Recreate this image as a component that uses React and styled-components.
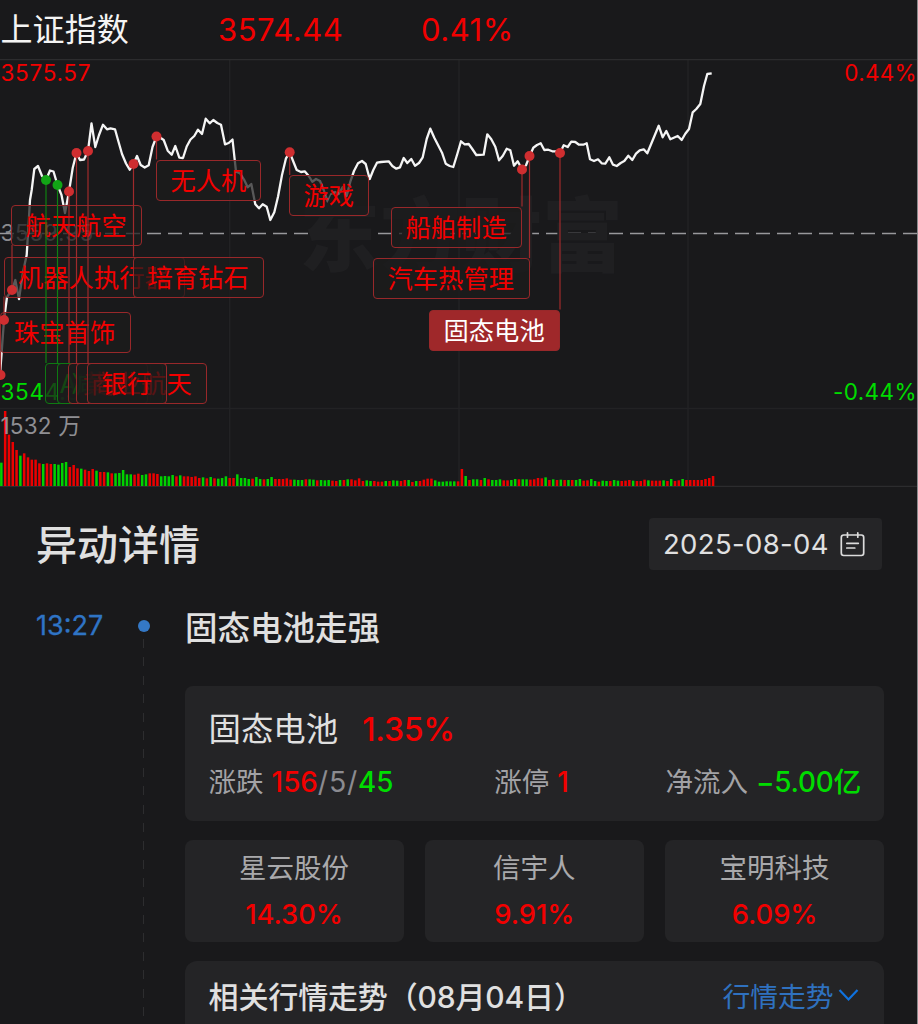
import React from 'react';
import styled, { createGlobalStyle } from 'styled-components';

const RED = '#f20000';
const GREEN = '#00dc00';

const Global = createGlobalStyle`
  * { box-sizing: border-box; }
  body { margin: 0; background: #19191b; }
`;

const Page = styled.main`
  width: 918px;
  height: 1024px;
  overflow: hidden;
  background: #19191b;
  border-right: 1px solid #8b8b8e;
  color: #e0e0e0;
  font-family: Inter, "Noto Sans CJK SC", sans-serif;
  white-space: nowrap;
`;

const Quote = styled.header`
  display: flex;
  align-items: center;
  height: 59px;
  font-size: 31px;
  line-height: 59px;
  letter-spacing: 0.5px;
  color: ${RED};
`;
const IndexName = styled.span`
  width: 218px;
  padding-left: 0.5px;
  font-size: 32px;
  letter-spacing: 0.1px;
  color: #f4f4f4;
`;
const IndexPrice = styled.span`
  width: 203px;
`;

const Chart = styled.section`
  position: relative;
  height: 428px;
  overflow: hidden;
`;
const Plot = styled.svg`
  display: block;
  width: 918px;
  height: 428px;
`;
const Layer = styled.svg`
  position: absolute;
  inset: 0;
  width: 918px;
  height: 428px;
`;
const Watermark = styled.div`
  position: absolute;
  left: 299px;
  top: 113px;
  font: 900 81px/116px "Noto Sans CJK SC", sans-serif;
  color: #1f1f21;
`;
const AxisLabel = styled.span`
  position: absolute;
  ${(p) => (p.$right ? 'right: 0' : 'left: 0.5px')};
  top: ${(p) => p.$top}px;
  font-size: 22.5px;
  line-height: 28px;
  letter-spacing: ${(p) => p.$track ?? 0.7}px;
  color: ${(p) => p.$color};
`;
const Tag = styled.span`
  position: absolute;
  left: ${(p) => p.$x}px;
  top: ${(p) => p.$y}px;
  width: ${(p) => p.$w}px;
  height: 41px;
  border: 1px solid ${(p) => (p.$green ? '#0e7a12' : '#98282a')};
  border-radius: 4px;
  padding-left: 13.5px;
  overflow: hidden;
  background: ${(p) => (p.$active ? '#9f282a' : 'rgba(28, 28, 28, 0.72)')};
  color: ${(p) => (p.$active ? '#fff' : p.$green ? '#00b400' : RED)};
  font-size: 25.3px;
  line-height: 39px;
`;

const Details = styled.section`
  padding: 31px 33px 0 36px;
`;
const DetailsHead = styled.div`
  display: flex;
  justify-content: space-between;
  align-items: center;
  height: 52px;
  padding-right: 2px;
`;
const Heading = styled.h1`
  margin: 0;
  padding-top: 1px;
  font-size: 41px;
  font-weight: 500;
  line-height: 52px;
`;
const DateButton = styled.button`
  display: flex;
  align-items: center;
  justify-content: space-between;
  width: 233px;
  height: 52px;
  padding: 0 17px 0 14px;
  border: 0;
  border-radius: 4px;
  background: #252527;
  color: #e0e0e0;
  font: 400 27.5px/52px Inter, sans-serif;
  letter-spacing: 0.35px;
`;
const Event = styled.article`
  display: grid;
  grid-template-columns: 67px 81px 1fr;
  margin-top: 36px;
`;
const Time = styled.time`
  font-size: 27px;
  line-height: 40px;
  -webkit-text-stroke: 0.3px #2f74c5;
  color: #2f74c5;
`;
const Track = styled.div`
  display: flex;
  flex-direction: column;
  align-items: center;
  padding-top: 14px;
`;
const TrackDot = styled.i`
  width: 12px;
  height: 12px;
  border-radius: 50%;
  background: #3478c6;
`;
const TrackLine = styled.i`
  width: 1px;
  height: 390px;
  margin-top: 7px;
  background: repeating-linear-gradient(#2d2d2f 0 9px, transparent 9px 18.4px);
`;
const Body = styled.div`
  display: flex;
  flex-direction: column;
  padding-left: 0.6px;
`;
const EventTitle = styled.h2`
  margin: 2px 0 36px 0.5px;
  font-size: 32.5px;
  font-weight: 500;
  line-height: 42px;
`;
const Card = styled.section`
  width: 699.5px;
  height: ${(p) => p.$h}px;
  border-radius: ${(p) => p.$radius || 8}px;
  background: #242426;
  padding: 0 23px 0 24px;
`;
const Sector = styled.div`
  display: flex;
  align-items: center;
  gap: 24px;
  padding-top: 21px;
  font-size: 32.4px;
  line-height: 46px;
`;
const SectorChange = styled.strong`
  margin-top: -1px;
  font-size: 32px;
  font-weight: 500;
  letter-spacing: -0.2px;
  color: ${RED};
`;
const Stats = styled.div`
  display: flex;
  justify-content: space-between;
  margin-top: 9px;
  font-size: 27.5px;
  line-height: 40px;
  color: #a2a2a5;
`;
const Stat = styled.span`
  display: flex;
  gap: 8px;
  padding-left: ${(p) => p.$inset || 0}px;
`;
const Figure = styled.span`
  font-size: ${(p) => (p.$color ? 27.8 : 28.5)}px;
  font-weight: ${(p) => (p.$color ? 500 : 400)};
  letter-spacing: ${(p) => p.$track || 0}px;
  color: ${(p) => p.$color || '#8b8b90'};
`;
const Stocks = styled.div`
  display: grid;
  grid-template-columns: repeat(3, 219px);
  justify-content: space-between;
  width: 699.5px;
  margin: 19px 0;
`;
const Stock = styled.div`
  height: 102px;
  padding-top: 5px;
  border-radius: 8px;
  background: #242426;
  text-align: center;
  font-size: 27.5px;
  line-height: 46px;
  color: #a9a9ab;
`;
const StockChange = styled.div`
  margin-top: 1px;
  font-size: 27.3px;
  font-weight: 500;
  color: ${RED};
`;
const TrendHead = styled.div`
  display: flex;
  justify-content: space-between;
  align-items: center;
  height: 67px;
  font-size: 30px;
  font-weight: 500;
`;
const TrendTitle = styled.span`
  letter-spacing: -0.15px;
`;
const TrendLink = styled.span`
  display: flex;
  align-items: center;
  gap: 4px;
  padding-right: 2.5px;
  font-size: 27.8px;
  font-weight: 400;
  color: #2f71bf;
`;

const PRICE =
  '0,375 4,320 7,297 12,290 15.3,280 19,299 23,272 26.7,255 30,200 31.7,190 34.3,169 38,166 42,176 46,180 50,170.5 53.5,171.5 57.5,185 61.5,195 65,213 69,191.5 72.7,168 76.5,153 80,160 84,159.5 88,151 91.5,123.5 95.3,147 99,135 103,124.7 107,129.3 110.5,128.3 115,129.3 118,140 122,154 126,163.5 129.7,169.7 133.5,164 137,156 140.7,165 144.7,167.5 148.7,165.3 152.5,147 156.5,136.5 160,137.5 163.7,140 167.7,150.7 171.7,154.7 175.3,146 179.3,157.7 183,158 186.7,146.5 190.5,139.5 194.3,136 198,129.7 202,134 205.7,118.7 209.7,123.3 213.3,120 217.3,123 221,124.7 225,144.3 228.7,143 232.5,139.5 236,171.7 240,173.3 244,179.5 247.7,187.3 251.3,184 255.3,204.3 259,208.3 262.7,204.3 266.7,206.7 270.3,220 274.3,212.3 278,196.7 282,175 286,158.3 289.7,152.3 293.3,161.5 296.7,170 301,172 304.7,171.3 308.7,176 312.3,181.7 316,179 320,181 323.7,190 327.7,201.7 331.3,194 335,192 338.7,194 342.7,187 346.7,196 350.3,181.7 354,171 358,163.3 362,161 365.7,164 369.7,179 373.3,170 377,162.7 381,162 388.7,161.3 392.3,166 396.3,168.7 400,167.3 403.7,158 407.3,163 411.3,159 415,165.7 419,163 422.7,157.3 426.7,139 430.3,128.7 434.3,137.7 442,152.7 445.7,163.7 449.7,166 453.3,167 457.3,154 461,141.3 464.7,144.3 468.7,144 472.3,149 476.3,155 483.7,154.7 487.3,134.3 491.3,139.3 495.3,146.7 499,160.3 502.7,156 506.7,148.7 510.3,150.3 514,165.7 517.7,161.3 522,169.3 526,165.3 529.7,156 533.3,147.7 537,145 540.7,143.3 544.3,150 548.3,149.7 552.3,151.3 556.3,151.3 560,153 563.7,145.3 567.7,147 571.3,141.7 575.3,142 579,144.7 583.3,144.7 586.7,143.3 590,159.3 594,161 598,159.3 601.7,163.3 605.3,163.7 609.3,157.3 613,164.7 616.7,166 620.7,163 624.3,161 628.3,155.7 632.3,160 636,153.7 639.7,150.3 643.7,149.3 647.3,153.3 658.7,125.7 662.7,137.3 666.3,131 670.3,139.3 677.7,136 681.7,140 685.3,133.7 689,129 692.7,112.3 696.3,109 700.3,104 704,86 707.3,74 711.7,73.3';

const VOLUME = (
  'g70 r225 r154 r132 r108 g91 r98 r86 r79 r79 r68 g66 r68 r66 g66 g64 g69 g72 r57 r63 r53 g52 r49 r45 r51 g46 r42 r42 g41 r38 ' +
  'g38 g39 g48 g35 g35 r34 r37 g33 g35 r38 r38 r36 g29 g30 g29 g33 r29 g32 r29 r29 r27 r29 r24 g26 r23 g27 r23 g22 g24 g29 ' +
  'r24 r24 g35 g24 g24 g21 r22 g27 g21 r20 g21 g27 r21 r21 r21 r23 r19 g19 g18 g18 r20 g20 g19 r17 g18 g17 g18 r16 r15 g18 ' +
  'r18 g20 r20 r17 r23 r15 g17 g15 r15 r13 r13 g15 r15 g17 g16 r15 r18 g18 r12 g15 r15 r19 r22 r22 g17 g13 g13 g14 g14 g14 ' +
  'r14 r51 g30 r18 g20 g20 r18 g24 r20 g18 g18 g20 r17 r17 g18 g21 r20 g20 g20 r19 r20 r24 r23 g26 r18 g20 r18 g19 r18 g18 ' +
  'r18 g18 g21 r16 r17 g21 g15 r13 g16 g15 r15 g18 g16 r15 r16 r18 g16 r15 r15 r19 g17 r16 r16 r16 g17 r15 g21 r15 r17 g21 ' +
  'r18 r18 r18 r18 r18 r21 r24 r30'
).split(' ');

// Coordinates are in page space; the chart itself starts at TOP.
const TOP = 59;
const MARKS = [
  { name: '珠宝首饰', dot: [0.5, 375], x: -0.5, y: 311.5, w: 131 },
  { name: '机器人执行器', dot: [4, 320], x: 3.5, y: 256.5, w: 181.5 },
  { name: '航天航空', dot: [12, 290], x: 11, y: 205, w: 131 },
  { name: 'AI应用', dot: [46, 180], x: 45, y: 363, w: 106, green: true },
  { name: '减肥药', dot: [57.5, 185], x: 57, y: 363, w: 106, green: true },
  { name: '黄金', dot: [69, 191.5], x: 68, y: 363, w: 80 },
  { name: '商业航天', dot: [76.5, 153], x: 76, y: 363, w: 131 },
  { name: '银行', dot: [88, 151], x: 87, y: 363, w: 80 },
  { name: '培育钻石', dot: [133.5, 164], x: 133, y: 256.5, w: 131 },
  { name: '无人机', dot: [156.5, 136.5], x: 156, y: 159.5, w: 105 },
  { name: '游戏', dot: [289.7, 152.3], x: 289, y: 175, w: 80 },
  { name: '船舶制造', dot: [522, 169.5], x: 391, y: 206.5, w: 131 },
  { name: '汽车热管理', dot: [529.5, 156], x: 373, y: 258, w: 156.5 },
  { name: '固态电池', dot: [560, 153], x: 429, y: 309.5, w: 131, active: true },
];

const STOCKS = [
  ['星云股份', '14.30%'],
  ['信宇人', '9.91%'],
  ['宝明科技', '6.09%'],
];

function CalendarIcon() {
  return (
    <svg width="25" height="26" viewBox="0 0 25 26" fill="none" stroke="#dcdcdc" strokeWidth="1.7" strokeLinecap="round">
      <rect x="1.300" y="4" width="22.400" height="20.500" rx="2.400" />
      <path d="M7.500 1.800v4.400M17.800 1.800v4.400M6.800 12.300h11.500M6.800 17h8" />
    </svg>
  );
}

function Stem({ mark }) {
  const [x, y] = mark.dot;
  return (
    <Layer viewBox="0 59 918 428">
      <path
        d={`M${x} ${y}V${y < mark.y ? mark.y : mark.y + 40}`}
        stroke={mark.green ? '#0e8012' : '#a02a2c'}
        strokeWidth="1.200"
      />
    </Layer>
  );
}

function IndexChart() {
  return (
    <Chart>
      <Watermark>东方财富</Watermark>
      <AxisLabel $top={0} $color={RED}>3575.57</AxisLabel>
      <AxisLabel $top={0} $color={RED} $right $track={0.3}>0.44%</AxisLabel>
      <AxisLabel $top={160} $color="#8a8a8d">3559.95</AxisLabel>
      <AxisLabel $top={319} $color={GREEN}>3544.33</AxisLabel>
      <AxisLabel $top={319} $color={GREEN} $right $track={0.4}>-0.44%</AxisLabel>
      <AxisLabel $top={353} $color="#8f8f93" $track={0.2}>1532 万</AxisLabel>
      <Plot viewBox="0 59 918 428">
        <g stroke="#222224" strokeWidth="1.500">
          <path d="M0 408.500H918M229.700 60V486M459 60V486M688 60V486" />
          <path d="M0 59.500H918M0 486.500H918" stroke="#2c2c2e" />
        </g>
        {VOLUME.map((bar, i) => {
          const h = Number(bar.slice(1)) / 3;
          return <rect key={i} x={0.1 + 3.806 * i} y={486 - h} width="2.500" height={h} fill={bar[0] === 'r' ? '#ec0000' : '#00d200'} />;
        })}
        <path d="M0 233.500H918" stroke="#98989b" strokeWidth="1.300" strokeDasharray="14 7" />
        <polyline points={PRICE} fill="none" stroke="#f5f5f5" strokeWidth="2.300" strokeLinejoin="round" />
      </Plot>
      {MARKS.map((m) => (
        <React.Fragment key={m.name}>
          <Stem mark={m} />
          <Tag $x={m.x} $y={m.y - TOP} $w={m.w} $green={m.green} $active={m.active}>{m.name}</Tag>
        </React.Fragment>
      ))}
      <Layer viewBox="0 59 918 428">
        {MARKS.map((m) => (
          <circle key={m.name} cx={m.dot[0]} cy={m.dot[1]} r="5" fill={m.green ? '#12a516' : '#cf2e30'} />
        ))}
      </Layer>
    </Chart>
  );
}

export default function App() {
  return (
    <Page>
      <Global />
      <Quote>
        <IndexName>上证指数</IndexName>
        <IndexPrice>3574.44</IndexPrice>
        <span>0.41%</span>
      </Quote>
      <IndexChart />
      <Details>
        <DetailsHead>
          <Heading>异动详情</Heading>
          <DateButton>2025-08-04<CalendarIcon /></DateButton>
        </DetailsHead>
        <Event>
          <Time>13:27</Time>
          <Track><TrackDot /><TrackLine /></Track>
          <Body>
            <EventTitle>固态电池走强</EventTitle>
            <Card $h={135}>
              <Sector>固态电池<SectorChange>1.35%</SectorChange></Sector>
              <Stats>
                <Stat>涨跌<span><Figure $color={RED}>156</Figure><Figure $track={0.8}>/5/</Figure><Figure $color={GREEN}>45</Figure></span></Stat>
                <Stat $inset={4}>涨停<Figure $color={RED}>1</Figure></Stat>
                <Stat>净流入<Figure $color={GREEN} $track={-0.2}>−5.00亿</Figure></Stat>
              </Stats>
            </Card>
            <Stocks>
              {STOCKS.map(([name, change]) => (
                <Stock key={name}>{name}<StockChange>{change}</StockChange></Stock>
              ))}
            </Stocks>
            <Card $h={90} $radius={12}>
              <TrendHead>
                <TrendTitle>相关行情走势（08月04日）</TrendTitle>
                <TrendLink>
                  行情走势
                  <svg width="21" height="14" viewBox="0 0 21 14" fill="none" stroke="#0f72df" strokeWidth="2.200"><path d="M1.500 2L10.500 11.500L19.500 2" /></svg>
                </TrendLink>
              </TrendHead>
            </Card>
          </Body>
        </Event>
      </Details>
    </Page>
  );
}
